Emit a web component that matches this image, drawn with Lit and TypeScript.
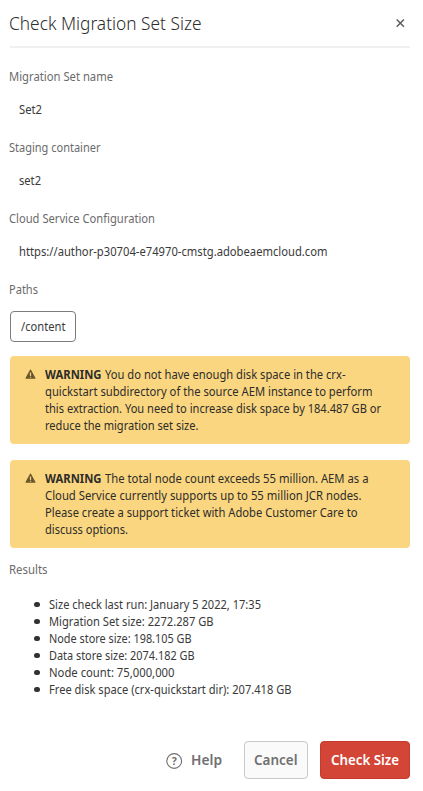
import { LitElement, html, css, svg } from "lit";
import { customElement, property } from "lit/decorators.js";

/** One unwrapped run of text, condensed or widened to a given measure. */
@customElement("fit-text")
class FitText extends LitElement {
  @property({ type: Number }) measure = 0;

  static styles = css`
    :host { display: inline-block; white-space: nowrap; vertical-align: top; }
    .run { display: inline-block; transform-origin: 0 50%; }
  `;

  protected firstUpdated() {
    this.fit();
    document.fonts?.ready.then(() => this.fit());
  }

  private fit() {
    const run = this.renderRoot.querySelector(".run") as HTMLElement;
    run.style.transform = "none";
    const natural = run.getBoundingClientRect().width;
    this.style.width = `${this.measure}px`;
    if (natural) run.style.transform = `scaleX(${this.measure / natural})`;
  }

  render() {
    return html`<span class="run"><slot></slot></span>`;
  }
}

type Run = [string, number];

const fields: { label: Run; value: Run }[] = [
  { label: ["Migration Set name", 104], value: ["Set2", 23] },
  { label: ["Staging container", 91.5], value: ["set2", 22] },
  { label: ["Cloud Service Configuration", 146], value: ["https://author-p30704-e74970-cmstg.adobeaemcloud.com", 308.5] },
];

const warnings: Run[][] = [
  [
    ["You do not have enough disk space in the crx-", 240.5],
    ["quickstart subdirectory of the source AEM instance to perform", 327.5],
    ["this extraction. You need to increase disk space by 184.487 GB or", 336],
    ["reduce the migration set size.", 153.5],
  ],
  [
    ["The total node count exceeds 55 million. AEM as a", 263.5],
    ["Cloud Service currently supports up to 55 million JCR nodes.", 316.5],
    ["Please create a support ticket with Adobe Customer Care to", 312.5],
    ["discuss options.", 83],
  ],
];

const results: Run[] = [
  ["Size check last run: January 5 2022, 17:35", 212],
  ["Migration Set size: 2272.287 GB", 164.5],
  ["Node store size: 198.105 GB", 142.5],
  ["Data store size: 2074.182 GB", 145.5],
  ["Node count: 75,000,000", 125.5],
  ["Free disk space (crx-quickstart dir): 207.418 GB", 242.5],
];

const text = ([content, measure]: Run) => html`<fit-text .measure=${measure}>${content}</fit-text>`;

const alertIcon = html`<svg class="alert-icon" width="12" height="11" viewBox="0 0 12 11">
  ${svg`<path fill="currentColor" fill-rule="evenodd" d="M6.05.8a.5.5 0 0 1 .9 0l4.5 8.2a.5.5 0 0 1-.45.75H2a.5.5 0 0 1-.45-.75zM5.9 3.4v3.5h1.2V3.4zM5.9 7.7v1.1h1.2V7.7z"/>`}
</svg>`;

@customElement("app-root")
class AppRoot extends LitElement {
  static styles = css`
    :host {
      display: block;
      box-sizing: border-box;
      height: 791px;
      padding: 0 13px 0 9px;
      overflow: hidden;
      background: #fff;
      color: #3a3a3a;
      font: 12px/17px "Noto Sans", "Open Sans", sans-serif;
    }
    .header {
      display: flex;
      justify-content: space-between;
      box-sizing: border-box;
      height: 48px;
      margin-left: 1px;
      padding: 9px 5px 0 0;
      border-bottom: 2px solid #f0f0f0;
    }
    .title { margin: 0 0 0 -1px; font-size: 19px; line-height: 28px; font-weight: 300; color: #2c2c2c; }
    .close { margin-top: 9px; color: #5c5c5c; }
    .fields { display: flex; flex-direction: column; gap: 21px; padding-top: 20px; }
    .field { display: flex; flex-direction: column; gap: 16px; }
    .label { color: #6b6b6b; }
    .value { padding-left: 10px; }
    .paths { margin-top: 21px; }
    .tag {
      box-sizing: border-box;
      width: 66px;
      height: 31px;
      margin: 13px 0 0 1px;
      padding: 6px 0 0 10px;
      border: 1px solid #7c7c7c;
      border-radius: 4px;
    }
    .warnings { display: flex; flex-direction: column; gap: 16px; margin: 14px 0 0 1px; }
    .warning {
      display: flex;
      box-sizing: border-box;
      height: 88px;
      padding: 10px 0 0 14px;
      border-radius: 4px;
      background: #fad681;
      color: #2e2d29;
    }
    .alert-icon { flex: none; margin: 3px 9px 0 0; color: #695628; }
    .line { display: flex; height: 17px; }
    .strong { font-weight: 700; margin-right: 3.5px; }
    .results-label { margin-top: 13px; }
    .results { display: flex; flex-direction: column; margin: 18px 0 0; padding: 0; list-style: none; }
    .result { display: flex; align-items: center; gap: 9.5px; height: 17px; padding-left: 25px; }
    .bullet { width: 5.5px; height: 5.5px; border-radius: 50%; background: #323232; }
    .footer {
      display: flex;
      justify-content: flex-end;
      align-items: center;
      height: 38px;
      margin-top: 43px;
      font-size: 14px;
      line-height: 20px;
      font-weight: 600;
      color: #707070;
    }
    .help { display: flex; align-items: center; gap: 8px; margin-right: 22px; }
    .button {
      display: flex;
      justify-content: center;
      align-items: center;
      box-sizing: border-box;
      height: 38px;
      border: 1px solid #cacaca;
      border-radius: 4px;
      background: #fafafa;
    }
    .cancel { width: 64px; margin-right: 12px; }
    .primary { width: 90px; border-color: #c53a2c; background: #d24537; color: #fff; }
    .mark { font: 700 10.5px "Noto Sans", sans-serif; fill: currentColor; text-anchor: middle; }
  `;

  render() {
    return html`
      <header class="header">
        <h1 class="title">${text(["Check Migration Set Size", 192.5])}</h1>
        <svg class="close" width="10" height="10" viewBox="0 0 10 10">
          <path d="M1.7 1.5l7.2 7.2M8.9 1.5L1.7 8.7" stroke="currentColor" stroke-width="1.5" />
        </svg>
      </header>
      <section class="fields">
        ${fields.map(
          (f) => html`<div class="field">
            <div class="label">${text(f.label)}</div>
            <div class="value">${text(f.value)}</div>
          </div>`
        )}
      </section>
      <div class="label paths">${text(["Paths", 29])}</div>
      <div class="tag">${text(["/content", 44.5])}</div>
      <section class="warnings">
        ${warnings.map(
          (lines) => html`<div class="warning">
            ${alertIcon}
            <div>
              ${lines.map(
                (line, i) => html`<div class="line">
                  ${i === 0 ? html`<span class="strong">${text(["WARNING", 56.5])}</span>` : ""}${text(line)}
                </div>`
              )}
            </div>
          </div>`
        )}
      </section>
      <div class="label results-label">${text(["Results", 38.5])}</div>
      <ul class="results">
        ${results.map((r) => html`<li class="result"><span class="bullet"></span>${text(r)}</li>`)}
      </ul>
      <footer class="footer">
        <div class="help">
          <svg width="18" height="18" viewBox="0 0 18 18">
            <circle cx="9.2" cy="10" r="7.4" fill="none" stroke="currentColor" stroke-width="1.1" />
            <text class="mark" x="9.2" y="13.8">?</text>
          </svg>
          ${text(["Help", 31])}
        </div>
        <div class="button cancel">${text(["Cancel", 43.5])}</div>
        <div class="button primary">${text(["Check Size", 68])}</div>
      </footer>
    `;
  }
}
